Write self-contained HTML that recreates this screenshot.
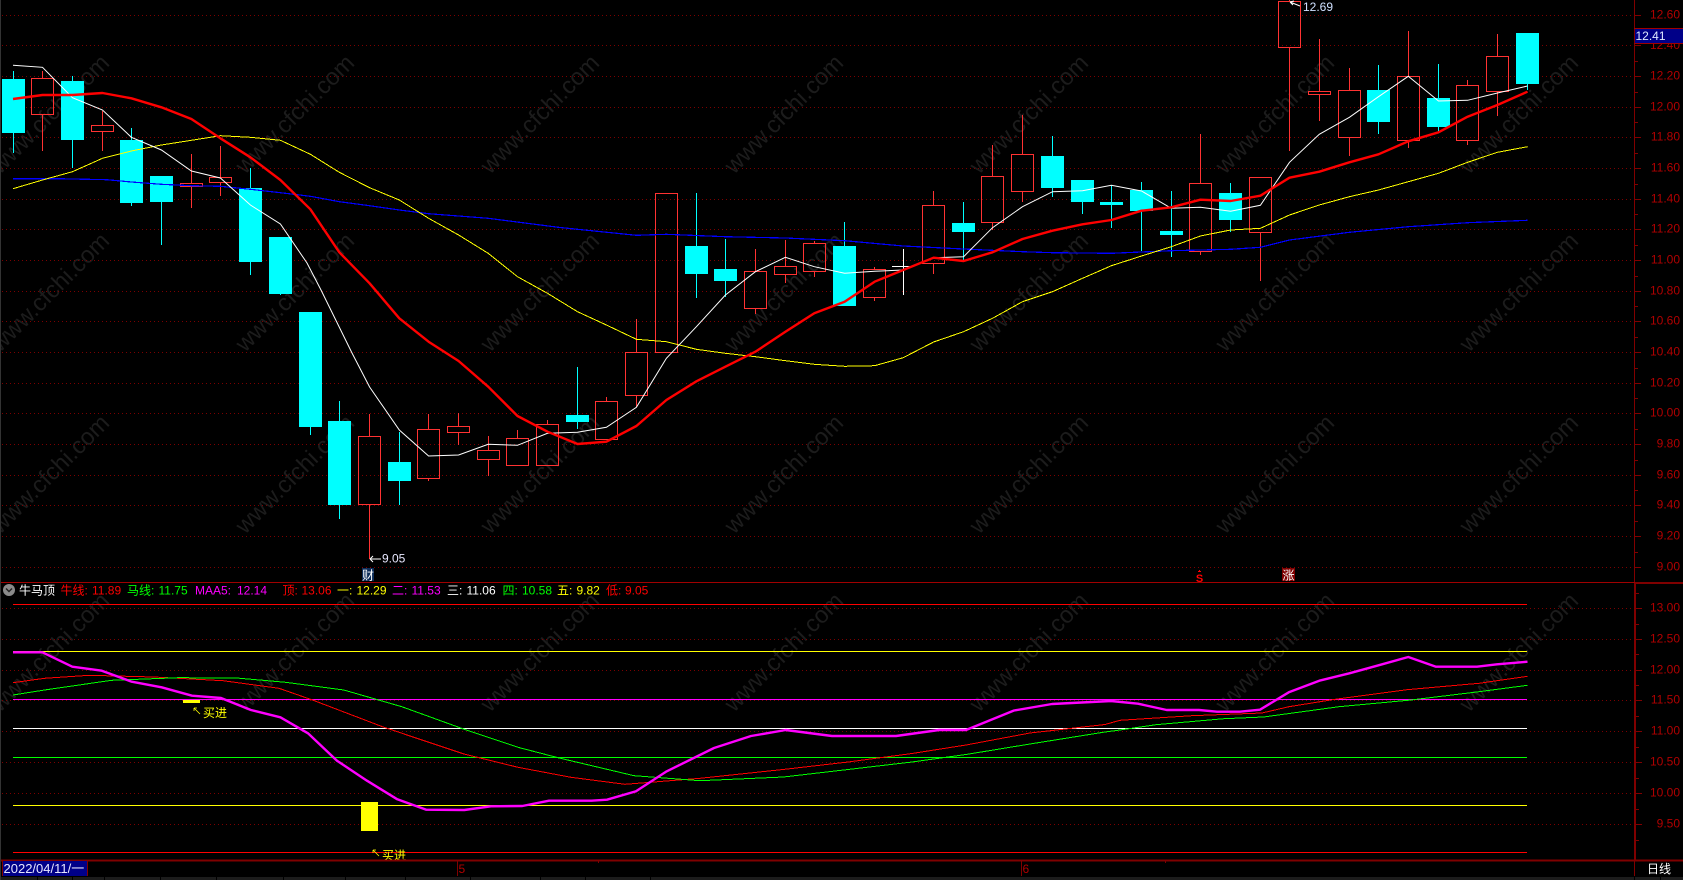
<!DOCTYPE html>
<html><head><meta charset="utf-8"><title>牛马顶</title>
<style>
html,body{margin:0;padding:0;background:#000;width:1683px;height:880px;overflow:hidden}
svg{display:block}
text{font-family:"Liberation Sans","Noto Sans CJK SC",sans-serif;font-size:12px}
.wm text{font-size:23.7px;fill:#1c1c1c}
.ax text{fill:#b00000;text-anchor:end}
</style></head><body>
<svg width="1683" height="880" viewBox="0 0 1683 880" xmlns="http://www.w3.org/2000/svg">
<rect width="1683" height="880" fill="#000"/>
<g class="wm">
<text x="0" y="175" transform="rotate(-45 0 175)">www.cfchi.com</text><text x="245" y="175" transform="rotate(-45 245 175)">www.cfchi.com</text><text x="490" y="175" transform="rotate(-45 490 175)">www.cfchi.com</text><text x="734" y="175" transform="rotate(-45 734 175)">www.cfchi.com</text><text x="979" y="175" transform="rotate(-45 979 175)">www.cfchi.com</text><text x="1225" y="175" transform="rotate(-45 1225 175)">www.cfchi.com</text><text x="1469" y="175" transform="rotate(-45 1469 175)">www.cfchi.com</text>
<text x="0" y="353" transform="rotate(-45 0 353)">www.cfchi.com</text><text x="245" y="353" transform="rotate(-45 245 353)">www.cfchi.com</text><text x="490" y="353" transform="rotate(-45 490 353)">www.cfchi.com</text><text x="734" y="353" transform="rotate(-45 734 353)">www.cfchi.com</text><text x="979" y="353" transform="rotate(-45 979 353)">www.cfchi.com</text><text x="1225" y="353" transform="rotate(-45 1225 353)">www.cfchi.com</text><text x="1469" y="353" transform="rotate(-45 1469 353)">www.cfchi.com</text>
<text x="0" y="535" transform="rotate(-45 0 535)">www.cfchi.com</text><text x="245" y="535" transform="rotate(-45 245 535)">www.cfchi.com</text><text x="490" y="535" transform="rotate(-45 490 535)">www.cfchi.com</text><text x="734" y="535" transform="rotate(-45 734 535)">www.cfchi.com</text><text x="979" y="535" transform="rotate(-45 979 535)">www.cfchi.com</text><text x="1225" y="535" transform="rotate(-45 1225 535)">www.cfchi.com</text><text x="1469" y="535" transform="rotate(-45 1469 535)">www.cfchi.com</text>
<text x="0" y="713" transform="rotate(-45 0 713)">www.cfchi.com</text><text x="245" y="713" transform="rotate(-45 245 713)">www.cfchi.com</text><text x="490" y="713" transform="rotate(-45 490 713)">www.cfchi.com</text><text x="734" y="713" transform="rotate(-45 734 713)">www.cfchi.com</text><text x="979" y="713" transform="rotate(-45 979 713)">www.cfchi.com</text><text x="1225" y="713" transform="rotate(-45 1225 713)">www.cfchi.com</text><text x="1469" y="713" transform="rotate(-45 1469 713)">www.cfchi.com</text>
</g>
<!-- dotted grid -->
<path fill="none" stroke="#7c0000" stroke-width="1" stroke-dasharray="1 3" shape-rendering="crispEdges" d="M2 15.5H1634M2 45.5H1634M2 76.5H1634M2 107.5H1634M2 137.5H1634M2 168.5H1634M2 199.5H1634M2 229.5H1634M2 260.5H1634M2 291.5H1634M2 321.5H1634M2 352.5H1634M2 383.5H1634M2 413.5H1634M2 444.5H1634M2 475.5H1634M2 505.5H1634M2 536.5H1634M2 567.5H1634M2 608.5H1634M2 639.5H1634M2 670.5H1634M2 700.5H1634M2 731.5H1634M2 762.5H1634M2 793.5H1634M2 824.5H1634"/>
<!-- red candles -->
<path fill="none" stroke="#ff3232" stroke-width="1" shape-rendering="crispEdges" d="
M42.5 71V78M42.5 115V151M31.5 78.5h22v36h-22z
M102.5 111V125M102.5 132V151M91.5 125.5h22v6h-22z
M191.5 154V183M191.5 187V208M180.5 183.5h22v3h-22z
M220.5 146V177M220.5 183V196M209.5 177.5h22v5h-22z
M369.5 414V436M369.5 505V559M358.5 436.5h22v68h-22z
M428.5 414V429M428.5 479V481M417.5 429.5h22v49h-22z
M458.5 413V426M458.5 433V445M447.5 426.5h22v6h-22z
M488.5 436V450M488.5 460V476M477.5 450.5h22v9h-22z
M517.5 430V438M506.5 438.5h22v27h-22z
M547.5 420V424M536.5 424.5h22v41h-22z
M606.5 397V401M595.5 401.5h22v38h-22z
M636.5 319V352M636.5 396V407M625.5 352.5h22v43h-22z
M655.5 193.5h22v159h-22z
M755.5 249V271M755.5 309V314M744.5 271.5h22v37h-22z
M785.5 240V266M785.5 275V283M774.5 266.5h22v8h-22z
M814.5 241V243M814.5 272V277M803.5 243.5h22v28h-22z
M874.5 267V269M874.5 298V301M863.5 269.5h22v28h-22z
M933.5 191V205M933.5 264V274M922.5 205.5h22v58h-22z
M992.5 145V176M992.5 223V230M981.5 176.5h22v46h-22z
M1022.5 115V154M1022.5 192V202M1011.5 154.5h22v37h-22z
M1200.5 134V183M1200.5 252V255M1189.5 183.5h22v68h-22z
M1260.5 233V281M1249.5 177.5h22v55h-22z
M1289.5 0V1M1289.5 48V151M1278.5 1.5h22v46h-22z
M1319.5 39V91M1319.5 95V121M1308.5 91.5h22v3h-22z
M1349.5 68V90M1349.5 138V156M1338.5 90.5h22v47h-22z
M1408.5 31V76M1408.5 141V148M1397.5 76.5h22v64h-22z
M1467.5 80V85M1467.5 141V145M1456.5 85.5h22v55h-22z
M1497.5 34V56M1497.5 92V116M1486.5 56.5h22v35h-22z"/>
<!-- doji -->
<path fill="none" stroke="#fff" stroke-width="1" shape-rendering="crispEdges" d="M903.5 249V295M892 266.5H914"/>
<!-- cyan wicks -->
<path fill="none" stroke="#00ffff" stroke-width="1" shape-rendering="crispEdges" d="M13.5 71V153M72.5 76V168M131.5 128V206M161.5 176V245M250.5 168V275M280.5 237V295M310.5 312V435M339.5 401V519M399.5 432V505M577.5 367V429M696.5 193V298M725.5 239V297M844.5 222V306M963.5 202V260M1052.5 136V197M1082.5 180V214M1111.5 185V228M1141.5 182V251M1171.5 191V257M1230.5 183V232M1378.5 65V134M1438.5 64V131M1527.5 33V90"/>
<!-- cyan bodies -->
<path fill="#00ffff" shape-rendering="crispEdges" d="M2 79h23v54h-23zM61 81h23v59h-23zM120 140h23v63h-23zM150 176h23v26h-23zM239 188h23v74h-23zM269 237h23v57h-23zM299 312h23v115h-23zM328 421h23v84h-23zM388 462h23v19h-23zM566 415h23v7h-23zM685 246h23v28h-23zM714 269h23v12h-23zM833 246h23v60h-23zM952 223h23v9h-23zM1041 156h23v32h-23zM1071 180h23v22h-23zM1100 202h23v3h-23zM1130 190h23v21h-23zM1160 231h23v4h-23zM1219 193h23v27h-23zM1367 90h23v32h-23zM1427 98h23v29h-23zM1516 33h23v51h-23z"/>
<!-- MA60 blue -->
<polyline fill="none" stroke="#0000ff" stroke-width="1.2" shape-rendering="crispEdges" points="13,178.7 57,178.7 107,179.7 131.4,182 161.4,184.3 191.4,185.7 220.4,186.3 250.4,189.3 280.4,192.7 310.4,196.3 339.3,201.7 369.6,205.7 399.3,210 428.6,213.7 488.2,218.3 560,227.5 636.4,235.3 666.4,234.3 725.4,236.7 785.4,238 844.6,240.7 903.2,246 963.6,249 1022.5,251.7 1052.5,252.7 1111.4,253.3 1171.3,250.7 1230.6,249.3 1260.4,247.3 1289.5,240 1349.4,232.3 1408.3,226.7 1467.6,222.7 1527.5,220.3"/>
<!-- MA20 yellow -->
<polyline fill="none" stroke="#ffff00" stroke-width="1" shape-rendering="crispEdges" points="13,188.7 42.5,180 72.5,171.7 102.5,158.3 131.4,151 161.4,145 191.4,140.3 220.4,135.7 250.4,137.3 280.4,140.3 310.4,154.3 339.3,172.3 369.6,187.7 399.3,200 428.6,218.3 458.6,235 488.2,253.3 517.5,276.7 547.5,293.3 577.5,311.7 606.4,325 636.4,339.3 666.4,341.7 696.4,349.3 725.4,353.3 755.4,356.7 785.4,360.7 814.3,364.3 844.6,366.3 874.6,365.7 903.2,357.7 933.6,342 963.6,331.7 992.5,318.3 1022.5,301.7 1052.5,291.7 1082.5,278.3 1111.4,265.7 1141.5,256 1171.3,246.7 1200.4,236 1230.6,230 1260.4,228.3 1289.5,215 1319.3,205 1349.4,196.7 1378.5,190 1408.3,181.7 1438.5,173.3 1467.6,162.3 1497.4,152.3 1527.5,146.7"/>
<!-- MA5 white -->
<polyline fill="none" stroke="#ffffff" stroke-width="1" points="13,65.3 42.5,67.3 72.5,97.7 102.5,110 131.4,137.3 161.4,150 191.4,171 220.4,178 250.4,205 280.4,224 307,263 321,290 352,353 369.6,387 399.3,430 428.6,456 458.6,455 488.2,444.3 517.5,445.3 547.5,433.3 577.5,432.3 606.4,427.3 636.4,407.3 666.4,358.3 696.4,326.7 725.4,295 755.4,271.7 785.4,257.3 814.3,266.7 844.6,273.3 874.6,271.3 903.2,270 933.6,257.7 963.6,256.7 992.5,227.7 1022.5,206.7 1052.5,191.7 1082.5,190.7 1111.4,185.3 1141.5,191 1171.3,208.3 1200.4,207.3 1230.6,211.3 1260.4,205.3 1289.5,162.3 1319.3,134.3 1349.4,117.3 1378.5,96.7 1408.3,76.3 1438.5,101 1467.6,100.3 1497.4,93 1527.5,86"/>
<!-- MA10 red -->
<polyline fill="none" stroke="#ff0000" stroke-width="2.4" stroke-linejoin="round" points="13,99 42.5,95 72.5,95 102.5,93 131.4,98.3 161.4,107.3 191.4,119 220.4,138.3 250.4,157.3 280.4,180 310.4,209.3 339.3,252.3 369.6,283.3 399.3,318.3 428.6,341.7 458.6,361 488.2,386.7 517.5,416 547.5,431.7 577.5,444 606.4,441.7 636.4,426 666.4,400 696.4,381.3 725.4,366.7 755.4,351.7 785.4,331.7 814.3,313.3 844.6,301.7 874.6,281.7 903.2,270 933.6,257.7 963.6,261 992.5,252.3 1022.5,239 1052.5,230.7 1082.5,224.3 1111.4,220 1141.5,210.7 1171.3,207.3 1200.4,199.7 1230.6,201 1260.4,195.7 1289.5,177.7 1319.3,171.7 1349.4,162.3 1378.5,154.3 1408.3,141.3 1438.5,132.3 1467.6,116.7 1497.4,105 1527.5,91.7"/>
<!-- hi/lo -->
<path fill="none" stroke="#fff" stroke-width="1" d="M1290 2L1300 6M1290 2l4 -1M1290 2l3 3M370 559H381M370 559l3 -3M370 559l3 3"/>
<text x="1303" y="11" fill="#cfe0ff">12.69</text>
<text x="382" y="562.5" fill="#e8e8ff">9.05</text>
<!-- event markers -->
<rect x="362" y="568" width="12" height="13" fill="#0c2c58"/>
<text x="362" y="579.5" fill="#fff">财</text>
<path d="M1199 570h1v1h1v1h-3v-1h1z" fill="#f00"/>
<text x="1199.5" y="582" fill="#f00" font-weight="bold" text-anchor="middle" style="font-size:11px">S</text>
<rect x="1282" y="568" width="13" height="13" fill="#800000"/>
<text x="1282.5" y="579.5" fill="#fff">涨</text>
<!-- panel dividers -->
<path fill="none" stroke="#a00000" stroke-width="1" shape-rendering="crispEdges" d="M0 582.5H1683"/>
<!-- legend -->
<circle cx="9" cy="590" r="6" fill="#8a8a8a"/>
<path d="M6 588.5l3 3 3-3" fill="none" stroke="#222" stroke-width="1.4"/>
<text x="19" y="594.5" fill="#fff">牛马顶</text>
<text x="60.5" y="594.5" fill="#f00">牛线:</text><text x="92" y="594.5" fill="#f00">11.89</text>
<text x="127" y="594.5" fill="#0f0">马线:</text><text x="158.5" y="594.5" fill="#0f0">11.75</text>
<text x="195" y="594.5" fill="#f0f">MAA5:</text><text x="237" y="594.5" fill="#f0f">12.14</text>
<text x="282.5" y="594.5" fill="#f00">顶:</text><text x="301.5" y="594.5" fill="#f00">13.06</text>
<text x="337" y="594.5" fill="#ff0">一:</text><text x="356.5" y="594.5" fill="#ff0">12.29</text>
<text x="392" y="594.5" fill="#f0f">二:</text><text x="411.5" y="594.5" fill="#f0f">11.53</text>
<text x="447" y="594.5" fill="#fff">三:</text><text x="466.5" y="594.5" fill="#fff">11.06</text>
<text x="502.5" y="594.5" fill="#0f0">四:</text><text x="522" y="594.5" fill="#0f0">10.58</text>
<text x="557" y="594.5" fill="#ff0">五:</text><text x="576.5" y="594.5" fill="#ff0">9.82</text>
<text x="606" y="594.5" fill="#f00">低:</text><text x="625" y="594.5" fill="#f00">9.05</text>
<!-- lower level lines -->
<g fill="none" stroke-width="1" shape-rendering="crispEdges">
<path stroke="#ff0000" d="M13 604.5H1527M13 852.5H1527"/>
<path stroke="#ffff00" d="M13 651.5H1527M13 805.5H1527"/>
<path stroke="#ff00ff" d="M13 699.5H1527"/>
<path stroke="#ffffff" d="M13 728.5H1527"/>
<path stroke="#00ff00" d="M13 757.5H1527"/>
</g>
<!-- lower yellow markers -->
<rect x="183" y="700" width="17" height="3" fill="#ff0"/>
<rect x="361" y="802" width="17" height="29" fill="#ff0"/>
<text x="203" y="717" fill="#ff0">买进</text>
<text x="382" y="859.5" fill="#ff0">买进</text>
<path d="M194 708l6 6M194 708v3M194 708h3M373 850l6 6M373 850v3M373 850h3" fill="none" stroke="#ff0" stroke-width="0.8"/>
<!-- lower curves -->
<polyline fill="none" stroke="#ff0000" stroke-width="1" shape-rendering="crispEdges" points="13,682.7 44.6,678.3 89,675.3 154,677 223,680.7 279,688.3 312.5,700 384,727.3 464,754 518,767.3 571,777.3 625,784.3 700,778.3 783,769.5 848,762 912,753.5 966,745 1030,733 1105,724.5 1120,720.3 1192,715.7 1262,713 1289,706.7 1335,699.3 1407,689.7 1479,683.3 1527.5,676.3"/>
<polyline fill="none" stroke="#00ff00" stroke-width="1" shape-rendering="crispEdges" points="13,695 44.6,690 111.6,680.3 178.6,677.7 236.6,678 285.7,682.3 343.8,690 401.8,706.7 464.3,729.3 518,747.3 558,757.7 634,775.7 700,780.7 783.5,777 848,769.5 912,762 966,754.5 1030,744 1105,732 1120,730 1156,724.7 1224,718.7 1263.6,717 1339,706.7 1411,700 1479,691.7 1527.5,685.3"/>
<polyline fill="none" stroke="#ff00ff" stroke-width="2.4" stroke-linejoin="round" points="13,652.3 42.4,652.3 72.3,666.7 101.8,670.7 131.7,681.7 161.6,687.3 192,695.7 221,698 250.9,710 280.4,717.3 308,733.3 337,760.7 367,780.7 397.3,799.3 426.3,809.7 464.3,810 491,806.3 522.3,806 549,800.7 591.5,800.7 607,799.7 636,791.3 666,771.7 714,748 751,736 785.7,730 832,736 896,736 939,730 966,730 1014,710.5 1052,704 1111,701 1138,703.7 1166.7,710 1199,710 1217,711.7 1240,711.7 1260,709.7 1288.8,692.3 1319.3,680.7 1349.4,673.3 1378.5,665.3 1408.3,657 1436,666.7 1477,666.7 1497,664.3 1527.5,661.7"/>
<!-- right axes -->
<path fill="none" stroke="#800000" stroke-width="1" shape-rendering="crispEdges" d="M1634.5 0V582M1634.5 860V876
M1635 15.5h6M1635 45.5h6M1635 76.5h6M1635 107.5h6M1635 137.5h6M1635 168.5h6M1635 199.5h6M1635 229.5h6M1635 260.5h6M1635 291.5h6M1635 321.5h6M1635 352.5h6M1635 383.5h6M1635 413.5h6M1635 444.5h6M1635 475.5h6M1635 505.5h6M1635 536.5h6M1635 567.5h6
M1635 30.5h3M1635 61.5h3M1635 92.5h3M1635 122.5h3M1635 153.5h3M1635 184.5h3M1635 214.5h3M1635 245.5h3M1635 276.5h3M1635 306.5h3M1635 337.5h3M1635 368.5h3M1635 398.5h3M1635 429.5h3M1635 460.5h3M1635 490.5h3M1635 521.5h3M1635 552.5h3
M1636 608.5h6M1636 639.5h6M1636 670.5h6M1636 700.5h6M1636 731.5h6M1636 762.5h6M1636 793.5h6M1636 824.5h6
M1636 593.5h3M1636 624.5h3M1636 654.5h3M1636 685.5h3M1636 716.5h3M1636 747.5h3M1636 778.5h3M1636 809.5h3M1636 840.5h3"/>
<path fill="none" stroke="#800000" stroke-width="2" shape-rendering="crispEdges" d="M1635 583V860M1635 583H1683M0 860.5H1683"/>
<g class="ax">
<text x="1680" y="18.5">12.60</text><text x="1680" y="49">12.40</text><text x="1680" y="79.5">12.20</text><text x="1680" y="110.5">12.00</text><text x="1680" y="140.5">11.80</text><text x="1680" y="171.5">11.60</text><text x="1680" y="202.5">11.40</text><text x="1680" y="232.5">11.20</text><text x="1680" y="263.5">11.00</text><text x="1680" y="294.5">10.80</text><text x="1680" y="324.5">10.60</text><text x="1680" y="355.5">10.40</text><text x="1680" y="386.5">10.20</text><text x="1680" y="416.5">10.00</text><text x="1680" y="447.5">9.80</text><text x="1680" y="478.5">9.60</text><text x="1680" y="508.5">9.40</text><text x="1680" y="539.5">9.20</text><text x="1680" y="570.5">9.00</text>
<text x="1680" y="611.5">13.00</text><text x="1680" y="642.5">12.50</text><text x="1680" y="673.5">12.00</text><text x="1680" y="703.5">11.50</text><text x="1680" y="734.5">11.00</text><text x="1680" y="765.5">10.50</text><text x="1680" y="796.5">10.00</text><text x="1680" y="827.5">9.50</text>
</g>
<!-- current price -->
<rect x="1635" y="28" width="48" height="16" fill="#000088"/>
<path d="M1634 28.5H1683M1634 43.5H1683" stroke="#a00000" stroke-width="1" shape-rendering="crispEdges"/>
<text x="1635.5" y="40" fill="#dfe8ff">12.41</text>
<!-- date axis -->
<rect x="2" y="861" width="85" height="15" fill="#000088"/>
<path d="M87.5 861V876M2.5 861V876" stroke="#800000" stroke-width="1" shape-rendering="crispEdges"/>
<text x="3.5" y="873" fill="#e6e6ff" style="font-size:13px">2022/04/11/一</text>
<path d="M457.5 861V876M1021.5 861V876M598.5 861V863M1165.5 861V863" stroke="#800000" stroke-width="1" shape-rendering="crispEdges"/>
<text x="458.5" y="873" fill="#b00000">5</text>
<text x="1022.5" y="873" fill="#b00000">6</text>
<text x="1647" y="873" fill="#fff">日线</text>
<!-- bottom strip / left edge -->
<rect x="0" y="877" width="1683" height="3" fill="#1c1c1c"/>
<path d="M37.5 877V880M72.5 877V880M104.5 877V880M160.5 877V880M216.5 877V880M283.5 877V880M345.5 877V880M405.5 877V880M470.5 877V880M540.5 877V880M585.5 877V880M650.5 877V880M1634.5 877V880M1660.5 877V880" stroke="#000" stroke-width="1" shape-rendering="crispEdges"/>
<rect x="0" y="0" width="1" height="880" fill="#333"/>
</svg>
</body></html>
